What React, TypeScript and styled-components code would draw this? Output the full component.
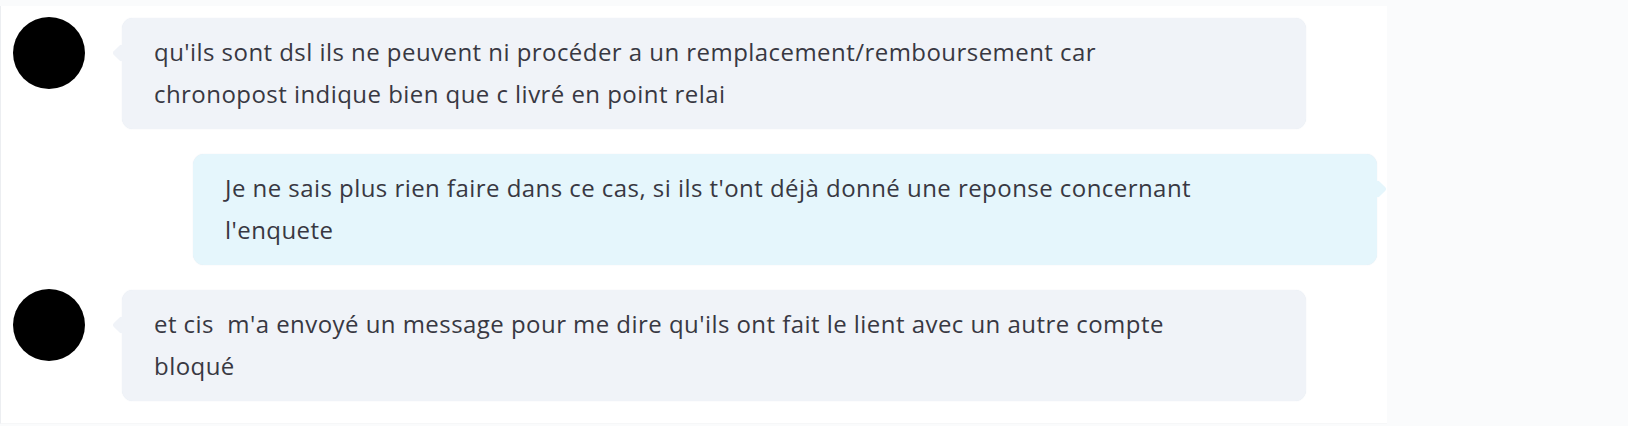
import React from "react";
import styled, { createGlobalStyle } from "styled-components";

const Global = createGlobalStyle`
  html, body { margin: 0; padding: 0; background: #fafbfc; }
  body { font-family: "Open Sans", "Noto Sans", sans-serif; }
  * { box-sizing: border-box; }
`;

const Page = styled.div`
  display: flex;
  width: 1628px;
  height: 426px;
  background: #fafbfc;
  overflow: hidden;
`;

const Thread = styled.div`
  width: 1387px;
  margin-top: 6px;
  height: 418px;
  background: #ffffff;
  border-left: 1px solid #eceef1;
  border-bottom: 1px solid #f6f7f8;
  display: flex;
  flex-direction: column;
  gap: 25px;
  padding-top: 12px;
`;

const Row = styled.div<{ $mine?: boolean }>`
  display: flex;
  align-items: flex-start;
  justify-content: ${(p) => (p.$mine ? "flex-end" : "flex-start")};
  padding-left: ${(p) => (p.$mine ? "0" : "12px")};
  padding-right: ${(p) => (p.$mine ? "10px" : "0")};
`;

const Avatar = styled.div`
  width: 72px;
  height: 72px;
  border-radius: 50%;
  background: #000;
  flex: none;
  margin-top: -1px;
  margin-right: 37px;
`;

const Bubble = styled.div<{ $mine?: boolean }>`
  position: relative;
  width: 1184px;
  height: 111px;
  border-radius: 11px;
  background: ${(p) => (p.$mine ? "#e5f6fc" : "#f0f3f8")};
  box-shadow: 0 0 1px rgba(200, 210, 225, 0.6);
  padding: 13px 32px;
  color: #383842;
  font-size: 24px;
  letter-spacing: 0.45px;
  line-height: 42px;

  &::before {
    content: "";
    position: absolute;
    top: 27px;
    ${(p) => (p.$mine ? "right: -9px;" : "left: -9px;")}
    width: 16px;
    height: 16px;
    background: ${(p) => (p.$mine ? "#e5f6fc" : "#f0f3f8")};
    border-radius: 3px;
    transform: rotate(45deg) scale(0.8, 0.8);
  }
`;

const Text = styled.div`
  position: relative;
  white-space: nowrap;
`;

const messages: { mine?: boolean; lines: string[] }[] = [
  {
    lines: [
      "qu'ils sont dsl ils ne peuvent ni procéder a un remplacement/remboursement car",
      "chronopost indique bien que c livré en point relai",
    ],
  },
  {
    mine: true,
    lines: [
      "Je ne sais plus rien faire dans ce cas, si ils t'ont déjà donné une reponse concernant",
      "l'enquete",
    ],
  },
  {
    lines: [
      "et cis\u00a0 m'a envoyé un message pour me dire qu'ils ont fait le lient avec un autre compte",
      "bloqué",
    ],
  },
];

export default function App() {
  return (
    <>
      <Global />
      <Page>
        <Thread>
          {messages.map((m, i) => (
            <Row key={i} $mine={m.mine}>
              {!m.mine && <Avatar />}
              <Bubble $mine={m.mine}>
                <Text>
                  {m.lines.map((l, j) => (
                    <React.Fragment key={j}>
                      {j > 0 && <br />}
                      {l}
                    </React.Fragment>
                  ))}
                </Text>
              </Bubble>
            </Row>
          ))}
        </Thread>
      </Page>
    </>
  );
}
